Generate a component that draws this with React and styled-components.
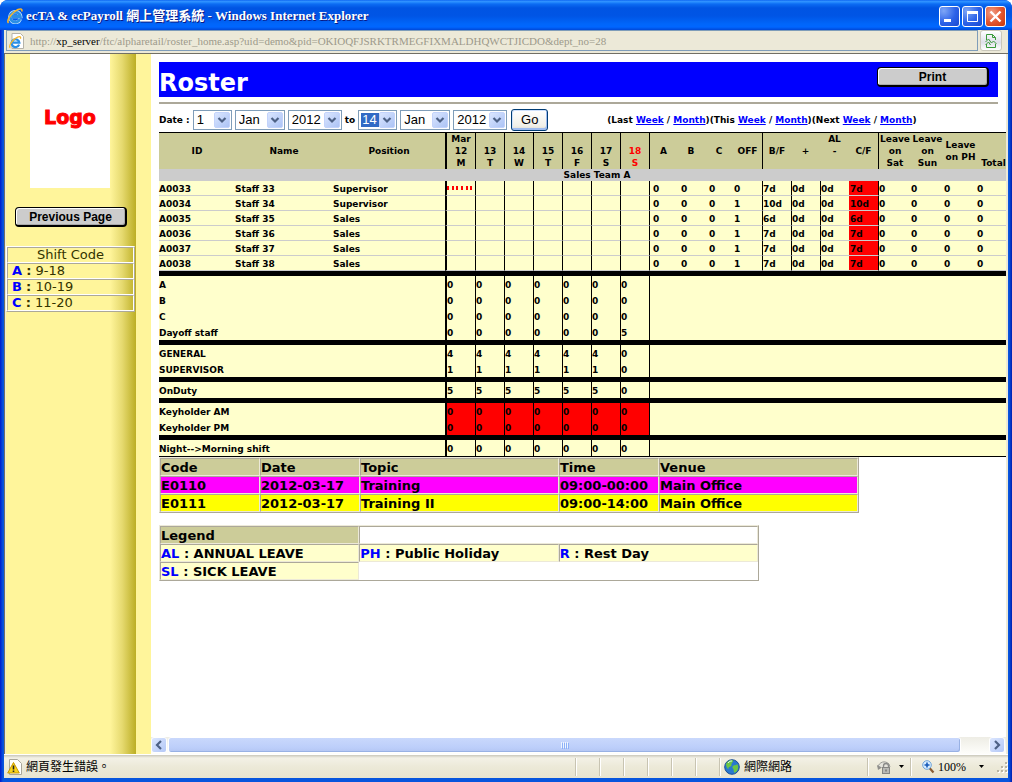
import React from "react";
import styled, { createGlobalStyle, css } from "styled-components";

const verdana = '"DejaVu Sans", Verdana, sans-serif';
const arial = '"Liberation Sans", Arial, sans-serif';
const ming = '"Liberation Serif", "Noto Sans CJK TC", serif';

const GlobalStyle = createGlobalStyle`
  * { box-sizing: border-box; }
  body { margin: 0; background: #fff; font-family: ${verdana}; color: #000; }
`;

/* ---------- browser window ---------- */
const Window = styled.div`
  display: flex;
  flex-direction: column;
  min-height: 100vh;
  background: linear-gradient(90deg, #0019cf, #0855dd 3px, #0855dd calc(100% - 3px), #001db0);
  border-radius: 8px 8px 0 0;
  overflow: hidden;
`;

const TitleBar = styled.header`
  display: flex;
  align-items: center;
  height: 30px;
  padding: 2px 6px 0 7px;
  background: linear-gradient(#0058ee 0, #3593ff 1px, #288eff 2px, #0c6cf3 4px, #0054e3 8px, #0055e5 16px, #0066fa 24px, #0066ff 27px, #0048d8 30px);
`;

const WindowTitle = styled.h1`
  flex: 1;
  margin: 0 0 0 3px;
  font: bold 13px/18px ${ming};
  color: #fff;
  text-shadow: 1px 1px #0a1883;
  white-space: nowrap;
`;

const WindowButtons = styled.div`
  display: flex;
  gap: 2px;
`;

const WindowButton = styled.button`
  display: flex;
  width: 21px;
  height: 21px;
  padding: 0;
  border: 1px solid #fff;
  border-radius: 3px;
  background: ${(p) =>
    p.$close
      ? "radial-gradient(circle at 30% 30%, #f0a088, #e35832 50%, #c83608)"
      : "radial-gradient(circle at 20% 20%, #7ea6f6, #2c62e8 55%, #1a49d0)"};
`;

const AddressBar = styled.div`
  display: flex;
  height: 24px;
  margin: 0 4px;
  padding: 0 6px 2px 2px;
  gap: 2px;
  background: #ece9d8;
  border-bottom: 1px solid #716f64;
`;

const AddressBox = styled.div`
  display: flex;
  flex: 1;
  align-items: center;
  gap: 5px;
  padding-left: 2px;
  min-width: 0;
  border: 1px solid #7f9db9;
`;

const Url = styled.span`
  font: 11px/18px ${ming};
  color: #9d9a8b;
  white-space: nowrap;
  b { font-weight: 400; color: #000; }
`;

const CompatButton = styled.button`
  display: flex;
  align-items: center;
  justify-content: center;
  width: 22px;
  padding: 0;
  border: 1px solid #c9c7ba;
  border-radius: 3px;
  background: linear-gradient(#fff, #dfe0ea 60%, #fff);
`;

const Page = styled.div`
  display: flex;
  flex: 1;
  margin: 0 4px;
  padding: 0 2px 0 1px;
  border-left: 1px solid #716f64;
  background: #ece9d8;
`;

/* ---------- sidebar ---------- */
const Sidebar = styled.aside`
  display: flex;
  flex-direction: column;
  align-items: flex-start;
  flex: none;
  width: 145px;
  background: linear-gradient(90deg, #fff59b 104px, #e6da70 116px, #bcae24 130px, #fff59b 130px);
`;

const LogoBox = styled.div`
  display: flex;
  align-items: center;
  justify-content: center;
  width: 80px;
  height: 134px;
  margin: 0 0 19px 24px;
  padding-bottom: 8px;
  background: #fff;
  color: #f00;
  font: bold 19px/22px ${verdana};
  -webkit-text-stroke: 1px #f00;
`;

const RaisedButton = styled.button`
  width: 112px;
  height: 20px;
  padding: 0;
  border: 1px solid #000;
  border-width: 1px 2px 2px 1px;
  border-radius: 4px;
  background: #ccc;
  box-shadow: inset 1px 1px #fff, inset -1px -1px #aaa;
  font: bold 12px/16px ${arial};
  color: #000;
`;

const SidebarButton = styled(RaisedButton)`
  margin: 0 0 19px 9px;
`;

const ShiftTable = styled.table`
  width: 129px;
  border-collapse: separate;
  border-spacing: 0;
  border: 1px solid #aca899;
  border-color: #fff #aca899 #aca899 #fff;
  font-size: 13px;
  line-height: 14px;
  th, td {
    padding: 0 4px;
    border: 1px solid #aca899;
    border-color: #aca899 #fff #fff #aca899;
    font-weight: 400;
    color: #330;
    text-align: left;
  }
  th { text-align: center; }
  b { color: #00f; }
  i { font-style: normal; font-weight: 700; }
`;

/* ---------- main ---------- */
const Main = styled.main`
  display: flex;
  flex-direction: column;
  flex: 1;
  min-width: 0;
  background: #fff;
`;

const Content = styled.div`
  flex: 1;
  padding: 8px 0 0 8px;
  overflow: hidden;
`;

const Heading = styled.div`
  display: flex;
  justify-content: space-between;
  height: 35px;
  margin-right: 8px;
  padding: 5px 9px 0 0;
  background: #00f;
  h2 {
    margin: 0;
    color: #fff;
    font-size: 24px;
    line-height: 32px;
  }
`;

const Rule = styled.hr`
  height: 2px;
  margin: 5px 8px 4px 0;
  border: 0;
  background: #aca899;
`;

const Filter = styled.form`
  display: flex;
  align-items: center;
  gap: 3px;
  height: 24px;
  font-size: 9px;
  font-weight: 700;
  white-space: nowrap;
`;

const SelectBox = styled.span`
  position: relative;
  display: flex;
  flex: none;
  width: ${(p) => p.$w}px;
  svg { position: absolute; right: 2px; top: 2px; pointer-events: none; }
`;

const Select = styled.select`
  appearance: none;
  width: 100%;
  height: 20px;
  padding: 0 0 0 3px;
  border: 1px solid #7f9db9;
  border-radius: 0;
  background: #fff;
  color: #000;
  font: 13px/18px ${arial};
  ${(p) =>
    p.$active &&
    css`
      color: #fff;
      background: linear-gradient(#316ac5, #316ac5) 2px 2px / 18px 14px no-repeat #fff;
    `}
`;

const GoButton = styled.button`
  width: 37px;
  height: 22px;
  margin-left: 1px;
  padding: 0;
  border: 1px solid #003c74;
  border-radius: 3px;
  background: linear-gradient(#fff, #f0efe8 80%, #dcd8cc);
  box-shadow: inset -1px -2px #9dbbf0, inset 1px 1px #cee0fb;
  font: 13px/16px ${arial};
`;

const QuickLinks = styled.nav`
  margin-left: 56px;
  a { color: #00f; }
`;

const RosterTable = styled.table`
  table-layout: fixed;
  width: 876px;
  border-collapse: separate;
  border-spacing: 0;
  border: 1px solid #000;
  border-width: 1px 0;
  background: #ffc;
  font-size: 9px;
  font-weight: 700;
  line-height: 12px;
  th, td { padding: 0; text-align: left; white-space: nowrap; }
`;

const edge = css`
  border-left: ${(p) => p.$edge || 0}px solid #000;
`;

const HeadCell = styled.th`
  && { text-align: center; }
  height: 36px;
  background: #cc9;
  color: ${(p) => (p.$red ? "#f00" : "#000")};
  vertical-align: ${(p) => (p.$bottom ? "bottom" : "middle")};
  ${edge}
`;

const TeamCell = styled.td`
  && { text-align: center; }
  height: 12px;
  background: #ccc;
`;

const StaffCell = styled.td`
  height: 15px;
  border-bottom: 1px solid #ccc;
  && { padding: 2px 0 0 ${(p) => p.$pad || 0}px; }
  background: ${(p) => (p.$alert ? "#f00" : "transparent")};
  ${edge}
`;

const CountCell = styled.td`
  height: 16px;
  && { padding-top: 2px; }
  background: ${(p) => (p.$alert ? "#f00" : "transparent")};
  ${edge}
`;

const BarCell = styled.td`
  height: 5px;
  background: #000;
`;

const GridTable = styled.table`
  table-layout: fixed;
  width: ${(p) => p.$w}px;
  margin-bottom: 12px;
  border-collapse: separate;
  border-spacing: 0;
  border: 1px solid #aca899;
  border-color: #ece9d8 #aca899 #aca899 #ece9d8;
  font-size: 13px;
  font-weight: 700;
  line-height: 14px;
`;

const GridCell = styled.td`
  height: 18px;
  padding: 2px 0 0;
  border: 1px solid #aca899;
  border-color: #aca899 #ece9d8 #ece9d8 #aca899;
  background: ${(p) => p.$bg || "#ffc"};
  text-align: left;
  white-space: nowrap;
  b { color: #00f; }
`;

const ScrollBar = styled.div`
  display: flex;
  gap: 1px;
  height: 17px;
  padding-right: 1px;
  background: linear-gradient(#eeede5, #fefefb);
`;

const ScrollButton = styled.button`
  display: flex;
  align-items: center;
  justify-content: center;
  width: 16px;
  height: 16px;
  padding: 0;
  border: 1px solid #fff;
  border-radius: 3px;
  background: linear-gradient(135deg, #dbe6ff, #b4c8f6);
`;

const Thumb = styled.div`
  display: flex;
  align-items: center;
  justify-content: center;
  flex: 1;
  height: 16px;
  margin-right: 27px;
  border: 1px solid #fff;
  border-radius: 3px;
  background: linear-gradient(#c9d8fc, #bccefa 70%, #b3c5f2);
  box-shadow: inset -1px -1px #98b1e4;
`;

/* ---------- status bar ---------- */
const StatusBar = styled.footer`
  display: flex;
  align-items: center;
  height: 24px;
  margin: 0 4px 4px;
  padding-left: 3px;
  border-top: 1px solid #fff;
  background: linear-gradient(#c9c7ba, #f3f1e6 3px, #ece9d8 12px, #e8e4d0);
  font: 12px/16px ${ming};
`;

const StatusText = styled.span`
  flex: 1;
  margin-left: 4px;
`;

const Panel = styled.div`
  display: flex;
  align-items: center;
  gap: ${(p) => p.$gap || 4}px;
  width: ${(p) => p.$w}px;
  height: 18px;
  padding-left: ${(p) => p.$pad || 0}px;
  border-left: 1px solid #c8c4b2;
  box-shadow: inset 1px 0 #fff;
  white-space: nowrap;
`;

const ZoomLevel = styled.span`
  width: 38px;
`;

/* ---------- drawings ---------- */
const IELogo = ({ size, page }) => (
  <svg width={size} height={size} viewBox="0 0 16 16" aria-hidden="true">
    {page && <path d="M3 .5h8.500l3 3v12H3z" fill="#fff" stroke="#b5b3a8" />}
    <g transform={page ? "translate(0 3) scale(.78)" : undefined}>
      {!page && <path d="M13.300 11A5.300 5.300 0 1 1 13.600 8.500H5" fill="none" stroke="#bfe2ff" strokeWidth="3.600" />}
      <path d="M13 11A5 5 0 1 1 13.300 8.500H5" fill="none" stroke="#2a8fe6" strokeWidth="2.800" />
      <path d="M1.500 15C-1 12.500 5 4 11 1.500c3-1.200 4.500-.5 3.700 2" fill="none" stroke="#f6b72c" strokeWidth="1.600" />
    </g>
  </svg>
);

const DropArrow = () => (
  <svg width="16" height="16" viewBox="0 0 16 16" aria-hidden="true">
    <defs>
      <linearGradient id="drop" x1="0" y1="0" x2="1" y2="1">
        <stop offset="0" stopColor="#dce7ff" />
        <stop offset="1" stopColor="#aac2f5" />
      </linearGradient>
    </defs>
    <rect x=".5" y=".5" width="15" height="15" rx="1.500" fill="url(#drop)" stroke="#c3d3fb" />
    <path d="M4.500 6l3.500 3.500L11.500 6" fill="none" stroke="#4d6185" strokeWidth="2.200" />
  </svg>
);

const Chevron = ({ right }) => (
  <svg width="8" height="10" viewBox="0 0 8 10" aria-hidden="true">
    <path d={right ? "M2 1l4 4-4 4" : "M6 1L2 5l4 4"} fill="none" stroke="#4d6185" strokeWidth="2.200" />
  </svg>
);

const Caret = () => (
  <svg width="5" height="3" viewBox="0 0 5 3" aria-hidden="true">
    <path d="M0 0h5L2.500 3z" fill="#000" />
  </svg>
);

const Warning = () => (
  <svg width="15" height="16" viewBox="0 0 15 16" aria-hidden="true">
    <path d="M2.500 .5h8l4 4v11h-12z" fill="#fff" stroke="#a9a79b" />
    <path d="M6.500 3.500l5.800 10.500H.7z" fill="#fbd51b" stroke="#c99700" />
    <path d="M6.500 6.500v4M6.500 11.500v1.500" stroke="#222" strokeWidth="1.600" />
  </svg>
);

const Globe = () => (
  <svg width="16" height="16" viewBox="0 0 16 16" aria-hidden="true">
    <circle cx="8" cy="8" r="7.300" fill="#2878d0" stroke="#1c4f94" />
    <path d="M2 5c2-4 6-4.500 7-3.500S7 4 7.500 6 4 7.500 4.500 9.500 2 8 2 5zM9 7c2-1.500 3 0 4-2 2 2 1.500 6-1 8s-2-1-2.500-2.500S7.500 8.500 9 7z" fill="#6cc644" />
    <path d="M4 4c1.500-2 3-2 4-2" stroke="#d8f3ff" fill="none" />
  </svg>
);

const PrivacyLock = () => (
  <svg width="15" height="15" viewBox="0 0 15 15" aria-hidden="true">
    <path d="M1 8C2 3 8 1 12 5l1 3" fill="#e4e3dc" stroke="#9c9c98" />
    <path d="M0 6l1 5 4-2.500z" fill="#8f8f8c" />
    <path d="M6.500 8.500V7a2.500 2.500 0 0 1 5 0v1.500" fill="none" stroke="#8a8a88" strokeWidth="1.300" />
    <rect x="5.500" y="8.500" width="7" height="6" fill="#b9b9b5" stroke="#858583" />
    <path d="M9 10.500v2" stroke="#555" />
  </svg>
);

const Magnifier = () => (
  <svg width="13" height="14" viewBox="0 0 13 14" aria-hidden="true">
    <path d="M7.500 8l4 4.500" stroke="#8a5b32" strokeWidth="2.200" />
    <circle cx="5" cy="5" r="4.300" fill="#d8edff" stroke="#6ea3d8" />
    <path d="M5 2.500v5M2.500 5h5" stroke="#1659b8" strokeWidth="1.600" />
  </svg>
);

const Grip = () => (
  <svg width="12" height="12" viewBox="0 0 12 12" aria-hidden="true">
    {[[9, 1], [5, 5], [9, 5], [1, 9], [5, 9], [9, 9]].map(([x, y]) => (
      <g key={`${x}-${y}`}>
        <rect x={x + 1} y={y + 1} width="2" height="2" fill="#fff" />
        <rect x={x} y={y} width="2" height="2" fill="#b8b4a2" />
      </g>
    ))}
  </svg>
);

const DashMark = styled.svg`
  display: block;
`;

const Dashes = () => (
  <DashMark width="26" height="6" viewBox="0 0 26 6" aria-hidden="true">
    {[0, 5, 9, 14, 19, 23].map((x) => (
      <rect key={x} x={x} width="2" height="4" fill="#f00" />
    ))}
  </DashMark>
);

/* ---------- data ---------- */
const columns = [76, 98, 112, 30, 29, 29, 29, 29, 29, 29, 28, 28, 28, 29, 29, 29, 29, 29, 33, 33, 33, 33, 25];
const days = [["Mar", "12", "M"], ["", "13", "T"], ["", "14", "W"], ["", "15", "T"], ["", "16", "F"], ["", "17", "S"], ["", "18", "S"]];
const staff = [
  ["A0033", "Staff 33", "Supervisor", 0, "7d"],
  ["A0034", "Staff 34", "Supervisor", 1, "10d"],
  ["A0035", "Staff 35", "Sales", 1, "6d"],
  ["A0036", "Staff 36", "Sales", 1, "7d"],
  ["A0037", "Staff 37", "Sales", 1, "7d"],
  ["A0038", "Staff 38", "Sales", 1, "7d"],
];
const groups = [
  [["A", "0000000"], ["B", "0000000"], ["C", "0000000"], ["Dayoff staff", "0000005"]],
  [["GENERAL", "4444440"], ["SUPERVISOR", "1111110"]],
  [["OnDuty", "5555550"]],
  [["Keyholder AM", "0000000", true], ["Keyholder PM", "0000000", true]],
  [["Night-->Morning shift", "0000000"]],
];
const events = [
  ["#f0f", "E0110", "2012-03-17", "Training", "09:00-00:00", "Main Office"],
  ["#ff0", "E0111", "2012-03-17", "Training II", "09:00-14:00", "Main Office"],
];
const shifts = [["A", "9-18"], ["B", "10-19"], ["C", "11-20"]];

const Lines = ({ items }) =>
  items.map((text, i) => (
    <React.Fragment key={i}>
      {i > 0 && <br />}
      {text || "\u00a0"}
    </React.Fragment>
  ));

const DateSelect = ({ label, value, w, active }) => (
  <SelectBox $w={w}>
    <Select aria-label={label} defaultValue={value} $active={active}>
      <option>{value}</option>
    </Select>
    <DropArrow />
  </SelectBox>
);

const Period = ({ name }) => (
  <>
    ({name} <a href="#week">Week</a> / <a href="#month">Month</a>)
  </>
);

const Roster = () => (
  <RosterTable>
    <colgroup>
      {columns.map((w, i) => (
        <col key={i} width={w} />
      ))}
    </colgroup>
    <thead>
      <tr>
        <HeadCell>ID</HeadCell>
        <HeadCell>Name</HeadCell>
        <HeadCell>Position</HeadCell>
        {days.map((d, i) => (
          <HeadCell key={i} $edge={i ? 1 : 2} $red={i === 6}>
            <Lines items={d} />
          </HeadCell>
        ))}
        <HeadCell $edge={1}>A</HeadCell>
        <HeadCell>B</HeadCell>
        <HeadCell>C</HeadCell>
        <HeadCell>OFF</HeadCell>
        <HeadCell $edge={1}>B/F</HeadCell>
        <HeadCell>+</HeadCell>
        <HeadCell><Lines items={["AL", "-", ""]} /></HeadCell>
        <HeadCell>C/F</HeadCell>
        <HeadCell $edge={1}><Lines items={["Leave", "on", "Sat"]} /></HeadCell>
        <HeadCell><Lines items={["Leave", "on", "Sun"]} /></HeadCell>
        <HeadCell><Lines items={["Leave", "on PH"]} /></HeadCell>
        <HeadCell $bottom>Total</HeadCell>
        <HeadCell />
      </tr>
    </thead>
    <tbody>
      <tr><TeamCell colSpan={23}>Sales Team A</TeamCell></tr>
      {staff.map(([id, name, position, off, leave], row) => (
        <tr key={id}>
          <StaffCell>{id}</StaffCell>
          <StaffCell>{name}</StaffCell>
          <StaffCell>{position}</StaffCell>
          {days.map((d, i) => (
            <StaffCell key={i} $edge={i ? 1 : 2}>{row === 0 && i === 0 && <Dashes />}</StaffCell>
          ))}
          <StaffCell $edge={1} $pad={3}>0</StaffCell>
          <StaffCell $pad={4}>0</StaffCell>
          <StaffCell $pad={4}>0</StaffCell>
          <StaffCell $pad={1}>{off}</StaffCell>
          <StaffCell $edge={1}>{leave}</StaffCell>
          <StaffCell $edge={1}>0d</StaffCell>
          <StaffCell $edge={1}>0d</StaffCell>
          <StaffCell $pad={1} $alert>{leave}</StaffCell>
          <StaffCell $edge={1}>0</StaffCell>
          <StaffCell>0</StaffCell>
          <StaffCell>0</StaffCell>
          <StaffCell>0</StaffCell>
          <StaffCell />
        </tr>
      ))}
    </tbody>
    {groups.map((rows, g) => (
      <tbody key={g}>
        <tr><BarCell colSpan={23} /></tr>
        {rows.map(([label, counts, alert]) => (
          <tr key={label}>
            <CountCell colSpan={3}>{label}</CountCell>
            {[...counts].map((n, i) => (
              <CountCell key={i} $edge={i ? 1 : 2} $alert={alert}>{n}</CountCell>
            ))}
            <CountCell colSpan={13} $edge={1} />
          </tr>
        ))}
      </tbody>
    ))}
  </RosterTable>
);

export default function App() {
  return (
    <>
      <GlobalStyle />
      <Window>
        <TitleBar>
          <IELogo size={16} />
          <WindowTitle>ecTA &amp; ecPayroll 網上管理系統 - Windows Internet Explorer</WindowTitle>
          <WindowButtons>
            <WindowButton aria-label="Minimize">
              <svg width="19" height="19"><rect x="4" y="12" width="7" height="3" fill="#fff" /></svg>
            </WindowButton>
            <WindowButton aria-label="Maximize">
              <svg width="19" height="19"><path d="M4.500 5v9.500h10V5M4 5.500h11" fill="none" stroke="#fff" /><rect x="4" y="4" width="11" height="3" fill="#fff" /></svg>
            </WindowButton>
            <WindowButton aria-label="Close" $close>
              <svg width="19" height="19"><path d="M4.500 4.500l10 10M14.500 4.500l-10 10" stroke="#fff" strokeWidth="2.400" /></svg>
            </WindowButton>
          </WindowButtons>
        </TitleBar>
        <AddressBar>
          <AddressBox>
            <IELogo size={16} page />
            <Url>
              http://<b>xp_server</b>/ftc/alpharetail/roster_home.asp?uid=demo&amp;pid=OKIOQFJSRKTRMEGFIXMALDHQWCTJICDO&amp;dept_no=28
            </Url>
          </AddressBox>
          <CompatButton aria-label="Compatibility View">
            <svg width="12" height="14" viewBox="0 0 12 14">
              <path d="M1.500 6V.5h6l3 3V6M7.500 .5v3h3M1.500 10v3.500h9V10" fill="none" stroke="#3a9a3a" />
              <path d="M.5 8l3-3 3 4 2-2 3 3M.5 11l3-3 2 3" fill="none" stroke="#3a9a3a" />
            </svg>
          </CompatButton>
        </AddressBar>
        <Page>
          <Sidebar>
            <LogoBox>Logo</LogoBox>
            <SidebarButton>Previous Page</SidebarButton>
            <ShiftTable>
              <thead><tr><th>Shift Code</th></tr></thead>
              <tbody>
                {shifts.map(([code, hours]) => (
                  <tr key={code}><td><b>{code}</b> <i>:</i> {hours}</td></tr>
                ))}
              </tbody>
            </ShiftTable>
          </Sidebar>
          <Main>
            <Content>
              <Heading>
                <h2>Roster</h2>
                <RaisedButton>Print</RaisedButton>
              </Heading>
              <Rule />
              <Filter onSubmit={(e) => e.preventDefault()}>
                <span>Date :</span>
                <DateSelect label="From day" value="1" w={39} />
                <DateSelect label="From month" value="Jan" w={50} />
                <DateSelect label="From year" value="2012" w={54} />
                <span>to</span>
                <DateSelect label="To day" value="14" w={39} active />
                <DateSelect label="To month" value="Jan" w={50} />
                <DateSelect label="To year" value="2012" w={54} />
                <GoButton>Go</GoButton>
                <QuickLinks>
                  <Period name="Last" />
                  <Period name="This" />
                  <Period name="Next" />
                </QuickLinks>
              </Filter>
              <Roster />
              <GridTable $w={700}>
                <colgroup>
                  {[100, 100, 199, 100, 199].map((w, i) => <col key={i} width={w} />)}
                </colgroup>
                <thead>
                  <tr>
                    {["Code", "Date", "Topic", "Time", "Venue"].map((t) => (
                      <GridCell as="th" key={t} $bg="#cc9">{t}</GridCell>
                    ))}
                  </tr>
                </thead>
                <tbody>
                  {events.map(([bg, ...cells]) => (
                    <tr key={cells[0]}>
                      {cells.map((t, i) => <GridCell key={i} $bg={bg}>{t}</GridCell>)}
                    </tr>
                  ))}
                </tbody>
              </GridTable>
              <GridTable $w={600}>
                <tbody>
                  <tr>
                    <GridCell as="th" $bg="#cc9">Legend</GridCell>
                    <GridCell colSpan={2} $bg="#fff" />
                  </tr>
                  <tr>
                    <GridCell><b>AL</b> : ANNUAL LEAVE</GridCell>
                    <GridCell><b>PH</b> : Public Holiday</GridCell>
                    <GridCell><b>R</b> : Rest Day</GridCell>
                  </tr>
                  <tr>
                    <GridCell><b>SL</b> : SICK LEAVE</GridCell>
                  </tr>
                </tbody>
              </GridTable>
            </Content>
            <ScrollBar>
              <ScrollButton aria-label="Scroll left"><Chevron /></ScrollButton>
              <Thumb>
                <svg width="8" height="7"><path d="M.5 0v6M2.500 0v6M4.500 0v6M6.500 0v6" stroke="#eef4fe" /><path d="M1.500 1v6M3.500 1v6M5.500 1v6M7.500 1v6" stroke="#8cb0f8" /></svg>
              </Thumb>
              <ScrollButton aria-label="Scroll right"><Chevron right /></ScrollButton>
            </ScrollBar>
          </Main>
        </Page>
        <StatusBar>
          <Warning />
          <StatusText>網頁發生錯誤。</StatusText>
          {[1, 2, 3, 4, 5, 6].map((n) => <Panel key={n} $w={24} />)}
          <Panel $w={148} $pad={4}><Globe />網際網路</Panel>
          <Panel $w={43} $pad={9} $gap={7}><PrivacyLock /><Caret /></Panel>
          <Panel $w={86} $pad={11} $gap={3}>
            <Magnifier />
            <ZoomLevel>100%</ZoomLevel>
            <Caret />
          </Panel>
          <Grip />
        </StatusBar>
      </Window>
    </>
  );
}
